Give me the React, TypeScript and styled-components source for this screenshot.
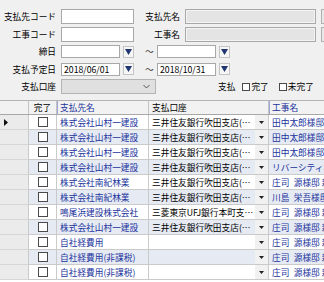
import React from "react";
import styled, { createGlobalStyle, css } from "styled-components";

const GlobalStyle = createGlobalStyle`
  html, body {
    margin: 0;
    padding: 0;
    background: #f0f0f0;
    overflow: hidden;
  }
  body {
    font-family: "Noto Sans CJK JP", "Noto Sans", sans-serif;
    font-size: 8.7px;
    color: #000000;
  }
`;

const Screen = styled.div`
  width: 324px;
  height: 282px;
  overflow: hidden;
  background: #f0f0f0;
  display: flex;
  flex-direction: column;
`;

/* ---------- search form ---------- */

const Form = styled.div`
  height: 100px;
  box-sizing: border-box;
  padding-top: 9px;
  display: flex;
  flex-direction: column;
  gap: 2.5px;
  flex-shrink: 0;
`;

const FormRow = styled.div`
  display: flex;
  align-items: center;
  height: 15px;
  white-space: nowrap;
`;

const Label = styled.div<{ $w: number }>`
  width: ${(p) => p.$w}px;
  flex-shrink: 0;
  text-align: right;
  margin-right: 5px;
  line-height: 15px;
`;

const TextBox = styled.div<{ $w: number; $disabled?: boolean; $h?: number }>`
  width: ${(p) => p.$w}px;
  height: ${(p) => p.$h ?? 15}px;
  flex-shrink: 0;
  box-sizing: border-box;
  border: 1px solid #a8a8a8;
  background: ${(p) => (p.$disabled ? "#e4e4e4" : "#ffffff")};
  padding: 0 2px;
  display: flex;
  align-items: center;
  ${(p) =>
    p.$disabled &&
    css`
      box-shadow: inset 0 0 0 1px #f4f4f4;
    `}
`;

const LookupButton = styled.div`
  width: 14px;
  height: 15px;
  margin-left: 5px;
  flex-shrink: 0;
  box-sizing: border-box;
  border: 1px solid #b0b0b0;
  background: #e8e8e8;
`;

const DateButton = styled.div`
  width: 11px;
  height: 12px;
  margin-left: 3px;
  flex-shrink: 0;
  box-sizing: border-box;
  border: 1px solid #c4c4c4;
  background: #f6f6f6;
  display: flex;
  align-items: center;
  justify-content: center;
`;

const Tilde = styled.div`
  width: 23px;
  flex-shrink: 0;
  box-sizing: border-box;
  padding-left: 11px;
  color: #333;
`;

const Combo = styled.div`
  width: 95px;
  height: 15px;
  flex-shrink: 0;
  box-sizing: border-box;
  border: 1px solid #b4b4b4;
  background: #e0e0e0;
  display: flex;
  align-items: center;
  justify-content: flex-end;
  padding-right: 5px;
`;

const PaidFilter = styled.div`
  margin-left: 62px;
  display: flex;
  align-items: center;
`;

const FilterOption = styled.label`
  display: flex;
  align-items: center;
  gap: 1px;
  margin-left: 7px;
  & + & {
    margin-left: 10px;
  }
`;

const CheckBox = styled.span<{ $size: number }>`
  display: inline-block;
  width: ${(p) => p.$size}px;
  height: ${(p) => p.$size}px;
  box-sizing: border-box;
  border: 1px solid #4a4a4a;
  background: #ffffff;
  flex-shrink: 0;
`;

/* ---------- data grid ---------- */

const COLUMNS = "29px 28px 92px 120px 70px 60px";
const LINK = "#22339c";

const Grid = styled.div`
  flex: 1;
  background: #ffffff;
  border-top: 1px solid #b4b4b4;
  overflow: hidden;
`;

const HeaderRow = styled.div`
  display: grid;
  grid-template-columns: ${COLUMNS};
  height: 14px;
  background: #f2f2f2;
  border-bottom: 1px solid #a8a8a8;
  box-sizing: border-box;
`;

const HeaderCell = styled.div<{ $link?: boolean; $center?: boolean }>`
  box-sizing: border-box;
  border-right: 1px solid #c4c4c4;
  padding-left: ${(p) => (p.$center ? 0 : 3)}px;
  text-align: ${(p) => (p.$center ? "center" : "left")};
  line-height: 13px;
  white-space: nowrap;
  overflow: hidden;
  color: ${(p) => (p.$link ? LINK : "#000000")};
  ${(p) =>
    p.$link &&
    css`
      border-left: 1px solid #9aa5d4;
      padding-left: 2px;
    `}
`;

const DataRow = styled.div<{ $shaded: boolean }>`
  display: grid;
  grid-template-columns: ${COLUMNS};
  height: 15px;
  background: ${(p) => (p.$shaded ? "#e6eaf3" : "#ffffff")};
`;

const Cell = styled.div<{ $link?: boolean }>`
  box-sizing: border-box;
  border-right: 1px solid #cacaca;
  border-bottom: 1px solid #cacaca;
  padding-left: 3px;
  display: flex;
  align-items: center;
  white-space: nowrap;
  overflow: hidden;
  min-width: 0;
  color: ${(p) => (p.$link ? LINK : "#000000")};
`;

const RowHeaderCell = styled(Cell)`
  background: #ebebeb;
  border-bottom-color: #d6d6d6;
  padding-left: 4px;
`;

const CheckCell = styled(Cell)`
  justify-content: center;
  padding-left: 0;
`;

const Ellipsis = styled.span`
  flex: 1;
  min-width: 0;
  overflow: hidden;
  text-overflow: ellipsis;
`;

const CellDrop = styled.span`
  width: 13px;
  height: 14px;
  flex-shrink: 0;
  background: #f1f1f1;
  display: flex;
  align-items: center;
  justify-content: center;
`;

const NavyArrow = () => (
  <svg width="7" height="6" viewBox="0 0 7 6">
    <polygon points="0,0 7,0 3.5,6" fill="#1f3670" />
  </svg>
);

const SmallArrow = () => (
  <svg width="5" height="3" viewBox="0 0 5 3">
    <polygon points="0,0 5,0 2.5,3" fill="#222" />
  </svg>
);

const Chevron = () => (
  <svg width="7" height="5" viewBox="0 0 7 5">
    <polyline points="0.5,1 3.5,4 6.5,1" fill="none" stroke="#555" strokeWidth="1" />
  </svg>
);

const CurrentRow = () => (
  <svg width="4" height="7" viewBox="0 0 4 7">
    <polygon points="0,0 4,3.5 0,7" fill="#111" />
  </svg>
);

type Payment = {
  payee: string;
  account: string;
  job: string;
};

const SMBC = "三井住友銀行吹田支店(普通)1234567";

const payments: Payment[] = [
  { payee: "株式会社山村一建設", account: SMBC, job: "田中太郎様邸 新築工事" },
  { payee: "株式会社山村一建設", account: SMBC, job: "田中太郎様邸 新築工事" },
  { payee: "株式会社山村一建設", account: SMBC, job: "田中太郎様邸 新築工事" },
  { payee: "株式会社山村一建設", account: SMBC, job: "リバーシティ桜ノ宮 改修工事" },
  { payee: "株式会社南紀林業", account: SMBC, job: "庄司\u2002源様邸 新築工事" },
  { payee: "株式会社南紀林業", account: SMBC, job: "川島\u2002栄吾様邸 新築工事" },
  { payee: "鳴尾浜建設株式会社", account: "三菱東京UFJ銀行本町支店(当座)7654321", job: "庄司\u2002源様邸 新築工事" },
  { payee: "株式会社山村一建設", account: SMBC, job: "庄司\u2002源様邸 新築工事" },
  { payee: "自社経費用", account: "", job: "庄司\u2002源様邸 新築工事" },
  { payee: "自社経費用(非課税)", account: "", job: "庄司\u2002源様邸 新築工事" },
  { payee: "自社経費用(非課税)", account: "", job: "庄司\u2002源様邸 新築工事" },
];

const App: React.FC = () => {
  return (
    <Screen>
      <GlobalStyle />
      <Form>
        <FormRow>
          <Label $w={56}>支払先コード</Label>
          <TextBox $w={73} />
          <Label $w={46}>支払先名</Label>
          <TextBox $w={131} $disabled />
          <LookupButton />
        </FormRow>
        <FormRow>
          <Label $w={56}>工事コード</Label>
          <TextBox $w={73} />
          <Label $w={46}>工事名</Label>
          <TextBox $w={131} $disabled />
          <LookupButton />
        </FormRow>
        <FormRow>
          <Label $w={56}>締日</Label>
          <TextBox $w={59} $h={13} />
          <DateButton>
            <NavyArrow />
          </DateButton>
          <Tilde>～</Tilde>
          <TextBox $w={59} $h={13} />
          <DateButton>
            <NavyArrow />
          </DateButton>
        </FormRow>
        <FormRow>
          <Label $w={56}>支払予定日</Label>
          <TextBox $w={59} $h={13}>2018/06/01</TextBox>
          <DateButton>
            <NavyArrow />
          </DateButton>
          <Tilde>～</Tilde>
          <TextBox $w={59} $h={13}>2018/10/31</TextBox>
          <DateButton>
            <NavyArrow />
          </DateButton>
        </FormRow>
        <FormRow>
          <Label $w={56}>支払口座</Label>
          <Combo>
            <Chevron />
          </Combo>
          <PaidFilter>
            <span>支払</span>
            <FilterOption>
              <CheckBox $size={8} />
              完了
            </FilterOption>
            <FilterOption>
              <CheckBox $size={8} />
              未完了
            </FilterOption>
          </PaidFilter>
        </FormRow>
      </Form>

      <Grid>
        <HeaderRow>
          <HeaderCell />
          <HeaderCell $center>完了</HeaderCell>
          <HeaderCell $link>支払先名</HeaderCell>
          <HeaderCell>支払口座</HeaderCell>
          <HeaderCell $link>工事名</HeaderCell>
          <HeaderCell />
        </HeaderRow>
        {payments.map((p, i) => (
          <DataRow key={i} $shaded={i % 2 === 1}>
            <RowHeaderCell>{i === 0 && <CurrentRow />}</RowHeaderCell>
            <CheckCell>
              <CheckBox $size={10} />
            </CheckCell>
            <Cell $link>{p.payee}</Cell>
            <Cell>
              <Ellipsis>{p.account}</Ellipsis>
              <CellDrop>
                <SmallArrow />
              </CellDrop>
            </Cell>
            <Cell $link>{p.job}</Cell>
            <Cell />
          </DataRow>
        ))}
      </Grid>
    </Screen>
  );
};

export default App;
